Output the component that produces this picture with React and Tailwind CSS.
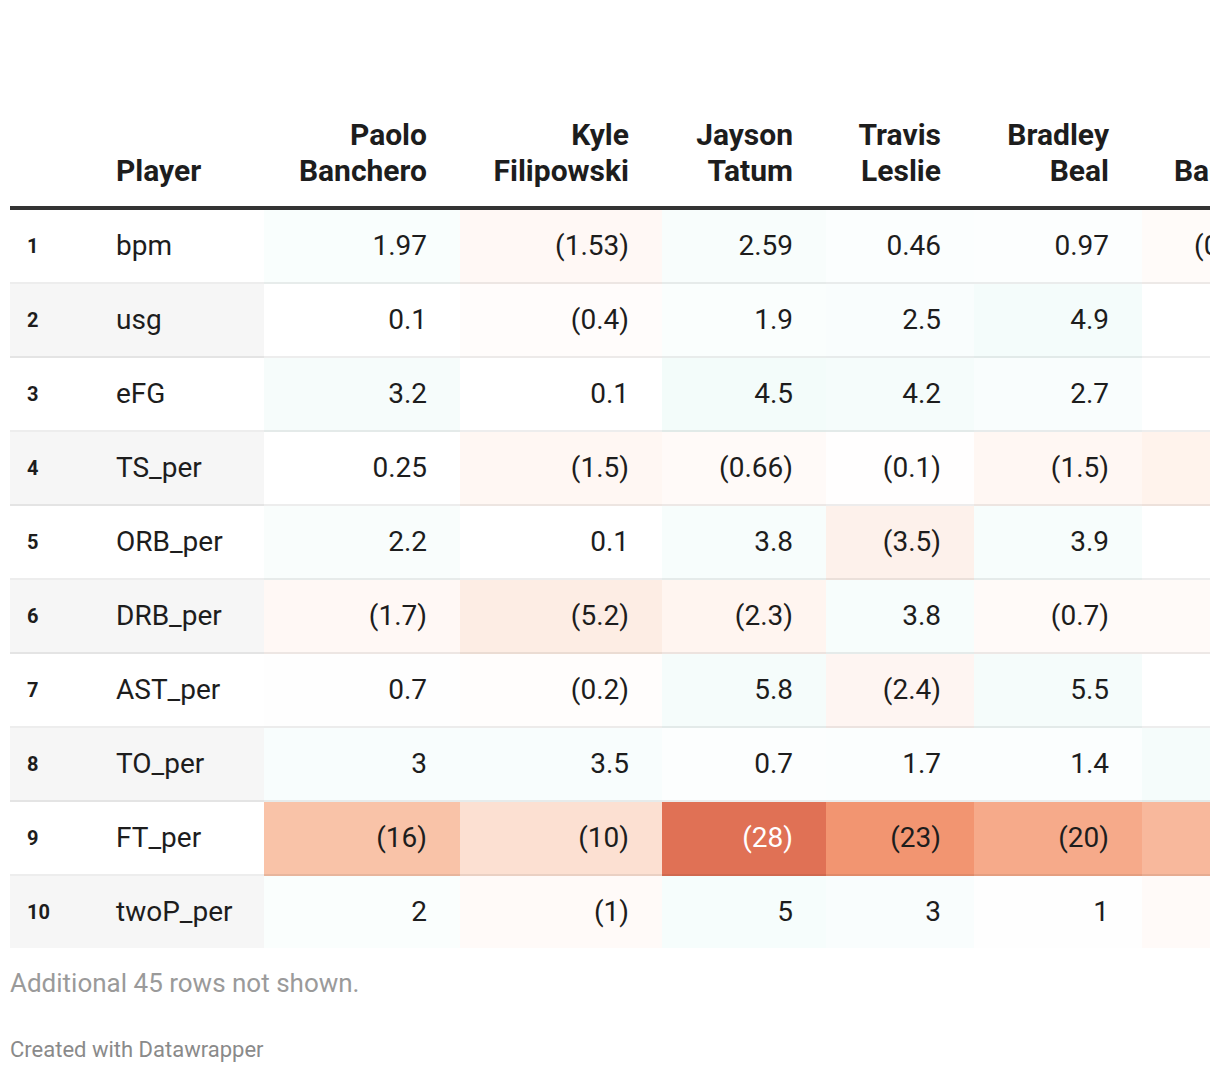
const cols = [
  { first: 'Paolo', last: 'Banchero' },
  { first: 'Kyle', last: 'Filipowski' },
  { first: 'Jayson', last: 'Tatum' },
  { first: 'Travis', last: 'Leslie' },
  { first: 'Bradley', last: 'Beal' },
  { first: 'Mo', last: 'Bamba' },
]

// [label, [value, bg, textClass?] x 6]
const rows = [
  ['bpm', [['1.97', 'bg-[#f9fefd]'], ['(1.53)', 'bg-[#fff8f5]'], ['2.59', 'bg-[#f8fdfc]'], ['0.46', 'bg-[#fbfefe]'], ['0.97', 'bg-[#fcfefe]'], ['(0.53)', 'bg-[#fffbf9]']]],
  ['usg', [['0.1', 'bg-[#ffffff]'], ['(0.4)', 'bg-[#fffcfb]'], ['1.9', 'bg-[#fafefd]'], ['2.5', 'bg-[#f9fdfd]'], ['4.9', 'bg-[#f4fcfb]'], ['0.3', 'bg-[#ffffff]']]],
  ['eFG', [['3.2', 'bg-[#f6fcfb]'], ['0.1', 'bg-[#ffffff]'], ['4.5', 'bg-[#f3fcfa]'], ['4.2', 'bg-[#f5fcfb]'], ['2.7', 'bg-[#f9fdfd]'], ['0.2', 'bg-[#ffffff]']]],
  ['TS_per', [['0.25', 'bg-[#ffffff]'], ['(1.5)', 'bg-[#fff7f3]'], ['(0.66)', 'bg-[#fffaf8]'], ['(0.1)', 'bg-[#fffefe]'], ['(1.5)', 'bg-[#fff7f3]'], ['(2.1)', 'bg-[#fff3ec]']]],
  ['ORB_per', [['2.2', 'bg-[#f9fdfc]'], ['0.1', 'bg-[#ffffff]'], ['3.8', 'bg-[#f7fdfc]'], ['(3.5)', 'bg-[#fdf1eb]'], ['3.9', 'bg-[#f7fdfc]'], ['0.4', 'bg-[#ffffff]']]],
  ['DRB_per', [['(1.7)', 'bg-[#fff8f5]'], ['(5.2)', 'bg-[#fdede4]'], ['(2.3)', 'bg-[#fff5f0]'], ['3.8', 'bg-[#f7fdfc]'], ['(0.7)', 'bg-[#fffaf8]'], ['(0.8)', 'bg-[#fffaf8]']]],
  ['AST_per', [['0.7', 'bg-[#fefefe]'], ['(0.2)', 'bg-[#fffdfc]'], ['5.8', 'bg-[#f5fcfb]'], ['(2.4)', 'bg-[#fef5f2]'], ['5.5', 'bg-[#f5fcfb]'], ['0.1', 'bg-[#ffffff]']]],
  ['TO_per', [['3', 'bg-[#f8fdfd]'], ['3.5', 'bg-[#f8fdfd]'], ['0.7', 'bg-[#fcfefe]'], ['1.7', 'bg-[#fbfefe]'], ['1.4', 'bg-[#fbfefe]'], ['4.1', 'bg-[#f5fcfb]']]],
  ['FT_per', [['(16)', 'bg-[#f9c3a8]'], ['(10)', 'bg-[#fce0d2]'], ['(28)', 'bg-[#e07155]', 'text-white'], ['(23)', 'bg-[#f29571]'], ['(20)', 'bg-[#f6aa8a]'], ['(18)', 'bg-[#f8b89c]']]],
  ['twoP_per', [['2', 'bg-[#fafefd]'], ['(1)', 'bg-[#fffaf8]'], ['5', 'bg-[#f6fdfc]'], ['3', 'bg-[#f9fdfd]'], ['1', 'bg-[#fefefe]'], ['(1)', 'bg-[#fffaf8]']]],
]

const grid = 'grid grid-cols-[106px_148px_196px_202px_164px_148px_168px_159px] w-[1291px]'

export default function App() {
  return (
    <div className="w-[1220px] h-[1074px] bg-white px-[10px] font-['Roboto',sans-serif] text-[#1d1d1d]">
      <div className="h-[100px]" />
      <div className="w-[1200px] overflow-hidden">
        {/* header */}
        <div className={`${grid} h-[110px] items-end border-b-4 border-[#333333] pb-[17px] text-[30px] font-bold leading-[36px]`}>
          <div />
          <div>Player</div>
          {cols.map((c) => (
            <div key={c.last} className="pr-[33px] text-right">
              <div>{c.first}</div>
              <div>{c.last}</div>
            </div>
          ))}
        </div>

        {/* body */}
        {rows.map(([label, vals], i) => {
          const even = i % 2 === 1
          const last = i === rows.length - 1
          const edge = last ? '' : 'border-b-2 border-black/[0.07]'
          return (
            <div key={label} className={`${grid} ${last ? 'h-[72px]' : 'h-[74px]'}`}>
              <div className={`flex items-center pl-[17px] text-[20px] font-bold ${edge} ${even ? 'bg-[#f6f6f6]' : 'bg-white'}`}>
                {i + 1}
              </div>
              <div className={`flex items-center text-[28px] ${edge} ${even ? 'bg-[#f6f6f6]' : 'bg-white'}`}>
                {label}
              </div>
              {vals.map(([v, bg, tc], j) => (
                <div key={j} className={`flex items-center justify-end pr-[33px] text-[28px] ${edge} ${bg} ${tc || ''}`}>
                  {v}
                </div>
              ))}
            </div>
          )
        })}
      </div>

      <p className="mt-[19px] text-[26px] leading-[32px] text-[#9a9a9a]">Additional 45 rows not shown.</p>
      <p className="mt-[36px] text-[22px] leading-[30px] text-[#8a8a8a]">Created with Datawrapper</p>
    </div>
  )
}
